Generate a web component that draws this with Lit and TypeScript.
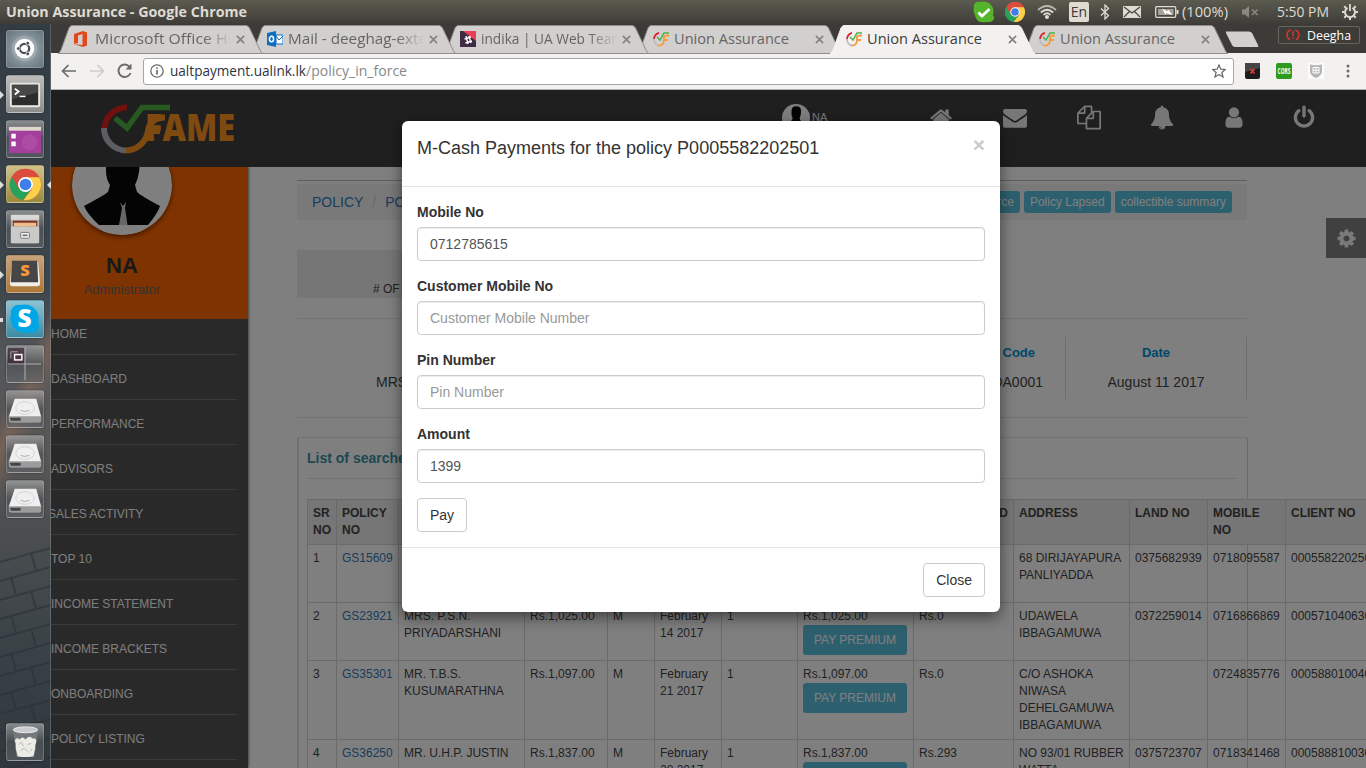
import { LitElement, html, svg, css, nothing } from "lit";
import { customElement, property } from "lit/decorators.js";

/** Desktop-chrome label fitted to a given width. */
const label = (text: string, width: number, size: number, cls = "") => html`<svg
  class="label ${cls}" width=${width} height="20" viewBox="0 0 ${width} 20"
><text x="0" y="15" font-size=${size} textLength=${width} lengthAdjust="spacingAndGlyphs">${text}</text></svg>`;

const labelCss = css`
  .label { display: block; overflow: visible; font-family: "Open Sans", "Noto Sans", sans-serif; flex: none; }
`;

const chromeBall = svg`
  <circle cx="20" cy="20" r="16" fill="#e0503f"/>
  <path d="M20 20 L6 12 A16 16 0 0 0 18 36 L26 24Z" fill="#25a35a"/>
  <path d="M6 12 A16 16 0 0 1 34 12 L20 12 L13 24Z" fill="#dd4b3e"/>
  <path d="M20 12.5H34A16 16 0 0 1 18 36L27 24Z" fill="#fdd04a"/>
  <circle cx="20" cy="20" r="7.6" fill="#fff"/><circle cx="20" cy="20" r="6" fill="#3f7ee8"/>`;

const fameMark = svg`
  <path d="M6 1.8A7 7 0 0 0 1 8" stroke="#d8232f" stroke-width="1.8" fill="none"/>
  <path d="M1 8A7 7 0 0 0 5 14.5" stroke="#b9b9b9" stroke-width="1.5" fill="none"/>
  <path d="M5 14.5Q11 15 11 9V5.5Q11 4.500 16 4.500M11 9H15" stroke="#f79a3b" stroke-width="1.8" fill="none"/>
  <path d="M4 6L7 9L11 2H16" stroke="#4caf50" stroke-width="1.5" fill="none"/>`;

/* ---------------------------------------------------------------- top panel */
@customElement("system-panel")
class SystemPanel extends LitElement {
  static styles = [labelCss, css`
    :host { display: flex; height: 24px; align-items: center; background: linear-gradient(#5c5b50, #3d3c37); fill: #dfdbd2; }
    .title { flex: 1; padding-left: 6px; font-weight: 700; }
    .cell { flex: none; height: 24px; display: flex; align-items: center; }
    .c23 { width: 23px; } .c24 { width: 24px; } .c27 { width: 27px; } .c31 { width: 31px; }
    .c32 { width: 32px; } .c36 { width: 36px; } .c59 { width: 59px; } .c65 { width: 65px; }
    .lang { width: 20px; height: 20px; border-radius: 2px; background: #dfdbd2; color: #3d3c37; font: 14px/20px "Open Sans", sans-serif; text-align: center; }
  `];
  render() {
    return html`
      <div class="title">${label("Union Assurance - Google Chrome", 241, 14.5)}</div>
      <div class="cell c32"><svg width="22" height="22" viewBox="0 0 22 22"><path d="M1 7C0 3 3 0 7 1Q16-1 20 7Q21 11 20 14C23 18 19 22 15 21Q3 23 2 14Q0 11 1 7Z" fill="#54b52d"/><path d="M5.500 11.500L9 15L16.500 8" stroke="#fff" stroke-width="2.800" fill="none"/></svg></div>
      <div class="cell c32"><svg width="20" height="20" viewBox="4 4 32 32">${chromeBall}</svg></div>
      <div class="cell c32"><svg width="20" height="16" viewBox="0 0 20 16" fill="none" stroke="#dfdbd2" stroke-width="1.700"><path d="M1 6Q10-2 19 6" opacity=".75"/><path d="M3.800 8.500Q10 3 16.200 8.500"/><path d="M6.500 11Q10 7.500 13.500 11"/><circle cx="10" cy="13" r="1.200" fill="#dfdbd2"/></svg></div>
      <div class="cell c31"><div class="lang">En</div></div>
      <div class="cell c23"><svg width="10" height="16" viewBox="0 0 10 16" fill="none" stroke="#dfdbd2" stroke-width="1.300"><path d="M1 4.500L8.500 11.500L5 15V1L8.500 4.500L1 11.500"/></svg></div>
      <div class="cell c32"><svg width="18" height="12" viewBox="0 0 18 12"><rect width="18" height="12"/><path d="M1 1L9 7L17 1M1 11L6.500 5.500M17 11L11.500 5.500" stroke="#45443e" stroke-width="1.200" fill="none"/></svg></div>
      <div class="cell c27"><svg width="24" height="12" viewBox="0 0 24 12"><rect x=".7" y=".7" width="20" height="10.600" rx="1" fill="none" stroke="#dfdbd2" stroke-width="1.300"/><rect x="3" y="3" width="15.500" height="6" fill="#a5a299"/><rect x="21.500" y="4" width="2" height="4"/><path d="M7 2.500L12.500 5.500L13 3.500L17.500 9L11 7L10.500 9Z" fill="#fff"/></svg></div>
      <div class="cell c59">${label("(100%)", 46, 14)}</div>
      <div class="cell c36"><svg width="18" height="14" viewBox="0 0 18 14" opacity=".42"><path d="M1 4.500H4L8 1V13L4 9.500H1Z"/><path d="M11 4.500L16.500 10M16.500 4.500L11 10" stroke="#dfdbd2" stroke-width="1.600"/></svg></div>
      <div class="cell c65">${label("5:50 PM", 52, 14)}</div>
      <div class="cell c24"><svg width="16" height="16" viewBox="0 0 16 16" fill="none" stroke="#dfdbd2"><path d="M5.500 3.900A5 5 0 1 0 10.500 3.900" stroke-width="2"/><path d="M8 0V7" stroke-width="1.800"/><path d="M0 8H2M14 8H16M8 14V16M2.300 2.300L4 4M12 4L13.700 2.300M2.300 13.700L4 12M12 12L13.700 13.700" stroke-width="2"/></svg></div>`;
  }
}

/* ----------------------------------------------------------------- launcher */
const drive = svg`<path d="M9 9H31L36 27V30Q36 33 34 33H5Q3 33 3 30V27Z" fill="#efefef"/><path d="M3 27H36V30Q36 33 34 33H5Q3 33 3 30Z" fill="#9c9c9c"/><path d="M4 28.500H15V31.500H5Z" fill="#444"/><ellipse cx="19.500" cy="18.500" rx="9.500" ry="6.500" fill="none" stroke="#d2d2d2"/><path d="M15 21Q19 23 24 21" stroke="#aaa" fill="none"/>`;
const tiles: { bg: string; art: unknown; mark?: string }[] = [
  { bg: "ubuntu", art: svg`<circle cx="19" cy="19" r="13" fill="#aeb6bb" opacity=".5"/><circle cx="19" cy="19" r="10" fill="#fff"/><circle cx="19" cy="19" r="4.800" fill="none" stroke="#4a4d50" stroke-width="2.300"/><g fill="#4a4d50" stroke="#fff" stroke-width=".8"><circle cx="12.700" cy="19" r="1.900"/><circle cx="22.300" cy="13.500" r="1.900"/><circle cx="22.300" cy="24.500" r="1.900"/></g>` },
  { bg: "silver", mark: "left", art: svg`<rect x="4" y="8" width="31" height="25" rx="2" fill="#e8e8e6"/><rect x="6" y="10" width="27" height="21" fill="#2c2c2c"/><path d="M6 10H33V18L6 25Z" fill="#474747"/><path d="M9 14L13 17L9 20" stroke="#fff" stroke-width="1.800" fill="none"/><path d="M14 22H20" stroke="#fff" stroke-width="1.500"/>` },
  { bg: "slate", art: svg`<rect x="3" y="7" width="33" height="27" fill="#a43f9d"/><rect x="3" y="7" width="33" height="4" fill="#ded7cc"/><circle cx="24" cy="23" r="8" fill="#c165b5" opacity=".35"/><path d="M5.500 14H10V19H5.500ZM5.500 22H10V27H5.500Z" fill="#fff"/>` },
  { bg: "gold", mark: "both", art: chromeBall },
  { bg: "slate", art: svg`<rect x="5" y="5" width="29" height="29" rx="2" fill="#b4b2af"/><rect x="5" y="5" width="29" height="5" fill="#d9d9d7"/><path d="M7 11H32V17H7Z" fill="#7a2c20"/><path d="M8 13H31V17H8Z" fill="#eebd8b"/><rect x="5" y="17" width="29" height="17" rx="1" fill="#cbcac8"/><rect x="15" y="23" width="9" height="6" rx="1" fill="#eee" stroke="#777"/><path d="M17 26H22" stroke="#666" stroke-width="1.500"/>` },
  { bg: "bronze", mark: "left", art: svg`<path d="M6 7H33L35 29Q35 32 32 32H7Q4 32 4 29Z" fill="#f1eee9"/><path d="M6 6H32L33 28H5Z" fill="#464646"/><text x="19.500" y="22" text-anchor="middle" font-family="Open Sans" font-weight="800" font-size="17" fill="#f6983b">S</text>` },
  { bg: "sky", mark: "dot", art: svg`<circle cx="19" cy="19" r="14.500" fill="#00a6e6"/><circle cx="13" cy="13" r="8" fill="#00a6e6"/><circle cx="26" cy="26" r="8" fill="#00a6e6"/><text x="19" y="28" text-anchor="middle" font-family="Open Sans" font-weight="800" font-size="25" fill="#fff">S</text>` },
  { bg: "slate", art: svg`<rect x="2" y="3" width="17" height="17" fill="#3a2230" opacity=".7"/><path d="M19.500 2V36M2 19.500H36" stroke="#b5b5b5"/><path d="M5 14V7H12" stroke="#aaa" fill="none"/><rect x="8.800" y="9.800" width="7.500" height="5.500" fill="none" stroke="#fff" stroke-width="1.500"/>` },
  { bg: "slate", art: drive }, { bg: "slate", art: drive }, { bg: "slate", art: drive },
];
const bricks = (() => {
  const out: unknown[] = [];
  for (let r = 0; r < 12; r++) {
    const y = 22 + r * 19;
    out.push(svg`<path d="M0 ${y + 7}L51 ${y - 7}"/>`);
    const x = r % 2 ? 11 : 31;
    out.push(svg`<path d="M${x} ${y + 6 - x * 0.27}L${x + 5} ${y + 24 - x * 0.27}"/>`);
  }
  return out;
})();

@customElement("app-launcher")
class AppLauncher extends LitElement {
  static styles = css`
    :host { display: flex; flex-direction: column; justify-content: space-between; align-items: center; box-sizing: border-box; height: 744px; padding: 6px 1px 7px 0; position: relative; overflow: hidden;
      background: linear-gradient(115deg, transparent 46%, rgba(170, 120, 90, .35) 50%, transparent 56%), linear-gradient(#343c43, #3d464d 35%, #55565a 45%, #5a5654 58%, #4d5052 66%, #394146 85%, #30383e); }
    .wall { position: absolute; left: 0; bottom: 0; stroke: #2b3237; stroke-width: 2; fill: none; opacity: .6; }
    .edge { position: absolute; right: 0; top: 0; width: 1px; height: 100%; background: rgba(160, 165, 168, .35); }
    .stack { display: flex; flex-direction: column; gap: 7px; position: relative; }
    .tile { position: relative; width: 36px; height: 36px; border: 1px solid rgba(200, 205, 208, .3); border-radius: 3px; box-shadow: 0 0 2px rgba(0, 0, 0, .4); }
    .tile svg { display: block; width: 38px; height: 38px; margin: -1px; }
    .ubuntu { background: radial-gradient(#b8bec2, #7b8991 65%, #66757e); }
    .silver { background: linear-gradient(#bdbcb9, #8d8d8b); }
    .slate { background: linear-gradient(rgba(165, 165, 165, .75), rgba(80, 84, 88, .75) 50%, rgba(100, 104, 108, .6)); }
    .gold { background: linear-gradient(#cfc08a, #9c8a3b); }
    .bronze { background: linear-gradient(#c9a27a, #ad7836); }
    .sky { background: linear-gradient(#8cc3d2, #3d8ba3); }
    .left::before, .both::before { content: ""; position: absolute; left: -7px; top: 15px; border: 4px solid transparent; border-left-color: #ddd; border-right: 0; }
    .both::after { content: ""; position: absolute; right: -8px; top: 15px; border: 4px solid transparent; border-right-color: #ddd; border-left: 0; }
    .dot::before { content: ""; position: absolute; left: -7px; top: 17px; width: 3px; height: 4px; background: #ddd; }
  `;
  render() {
    return html`
      <svg class="wall" width="51" height="235" viewBox="0 0 51 235">${bricks}</svg>
      <div class="edge"></div>
      <div class="stack">
        ${tiles.map((t) => html`<div class="tile ${t.bg} ${t.mark ?? ""}"><svg viewBox="0 0 39 39">${t.art}</svg></div>`)}
      </div>
      <div class="stack"><div class="tile slate"><svg viewBox="0 0 39 39"><path d="M7 6H33L29 35H11Z" fill="#74797d"/><ellipse cx="20" cy="7" rx="12.500" ry="3" fill="#c8cccc" stroke="#eee"/><path d="M9 18Q11 14 14 17Q17 13 20 17Q24 12 27 16Q32 15 31 20Q29 23 30 26L28 34Q20 36 12 34L10 26Q11 22 9 18Z" fill="#ecece7"/><path d="M13 22L16 20L18 24M22 22L26 21M15 28L19 26L23 30M25 29L27 26" stroke="#b9b9b2" fill="none"/></svg></div></div>`;
  }
}

/* ------------------------------------------------------------ browser chrome */
const office = svg`<path d="M0 3L9 0L13 1.500V14.500L9 16L0 13L8.500 14V3L4 4.500V12L0 13Z" fill="#e0491b"/>`;
const outlook = svg`<path d="M0 2L9 0V16L0 14Z" fill="#0f6fc0"/><rect x="9" y="4" width="7" height="9" fill="#fff" stroke="#0f6fc0"/><path d="M9 5L12 9L16 5" stroke="#0f6fc0" fill="none"/><ellipse cx="4.500" cy="8" rx="2.100" ry="2.700" fill="none" stroke="#fff" stroke-width="1.500"/>`;
const slack = svg`<rect width="16" height="16" fill="#3f2c42"/><path d="M3 0H16V10Z" fill="#ec4058"/><path d="M4.500 8L11 6M5.500 12L12 10M6 5L8 13M9 5L11 12" stroke="#fff" stroke-width="1.400"/>`;
const tabs = [
  { icon: office, text: "Microsoft Office Ho", w: 142, fade: true },
  { icon: outlook, text: "Mail - deeghag-exte", w: 139, fade: true },
  { icon: slack, text: "indika | UA Web Team", w: 143, fade: true },
  { icon: fameMark, text: "Union Assurance", w: 115 },
  { icon: fameMark, text: "Union Assurance", w: 115, active: true },
  { icon: fameMark, text: "Union Assurance", w: 115 },
];

@customElement("browser-chrome")
class BrowserChrome extends LitElement {
  static styles = [labelCss, css`
    :host { display: block; }
    .strip { display: flex; height: 29px; padding-left: 7px; background: #3c3b37; align-items: flex-end; }
    .tab { flex: none; width: 206px; height: 28px; margin-right: -13px; position: relative; display: flex; align-items: center; box-sizing: border-box; padding-left: 16px; fill: #656565; }
    .shape { position: absolute; left: 0; top: 0; fill: #d2d0ce; stroke: #8f8e8b; }
    .active { fill: #3c3c3c; }
    .active .shape { fill: #f2f1f0; stroke: #f2f1f0; }
    .ico { position: relative; flex: none; width: 16px; height: 16px; margin-right: 5px; }
    .txt { position: relative; width: 139px; overflow: hidden; }
    .fade { -webkit-mask-image: linear-gradient(90deg, #000 78%, transparent 98%); mask-image: linear-gradient(90deg, #000 78%, transparent 98%); }
    .x { position: relative; width: 9px; height: 9px; margin-left: 2px; stroke: #84827f; stroke-width: 1.8; }
    .plus { flex: none; margin: 0 0 5px 9px; }
    .user { flex: none; margin: 0 0 9px 19px; width: 82px; height: 18px; border: 1px solid #67655e; border-radius: 2px; display: flex; align-items: center; justify-content: space-between; padding: 0 8px 0 7px; box-sizing: border-box; fill: #fff; }
    .bar { height: 37px; box-sizing: border-box; background: #f2f1f0; border-bottom: 1px solid #b5b3b0; display: flex; align-items: center; padding: 0 9px 0 10px; }
    .nav { flex: none; margin-right: 12px; }
    .url { flex: none; width: 1091px; height: 27px; margin-left: -2px; border: 1px solid #a9a7a5; border-radius: 3px; background: #fff; display: flex; align-items: center; padding: 0 7px 0 6px; box-sizing: border-box; }
    .host { fill: #2c3340; margin: 0 0 0 6px; } .path { fill: #888; }
    .star { margin-left: auto; }
    .ext { flex: none; margin-left: 16px; }
    .url + .ext { margin-left: 11px; }
    .more { margin-left: 22px; }
  `];
  render() {
    return html`
      <div class="strip">
        ${tabs.map((t, i) => html`<div class="tab ${t.active ? "active" : ""}" style="z-index:${t.active ? 20 : 10 - i}">
          <svg class="shape" width="206" height="29" viewBox="0 0 206 29"><path d="M.5 28.500Q2 27 3 25L11 3Q12.500 .5 14 .5H188Q190 .5 191.500 3L202 25Q203 28 205 28.500Z"/></svg>
          <svg class="ico" viewBox="0 0 16 16">${t.icon}</svg>
          <div class="txt ${t.fade ? "fade" : ""}">${label(t.text, t.w, 14.5)}</div>
          <svg class="x" viewBox="0 0 10 10"><path d="M1 1L9 9M9 1L1 9"/></svg>
        </div>`)}
        <svg class="plus" width="34" height="17" viewBox="0 0 34 17"><path d="M1 .5H24Q26 .5 27 2L33 14Q34 16 32 16H10Q8 16 7 14L1 2Z" fill="#d2d0ce"/></svg>
        <div class="user"><svg width="14" height="12" viewBox="0 0 14 12" fill="none" stroke="#d8362c" stroke-width="1.500"><path d="M5 1Q1 2 1 6Q1 9 4 11M9 1Q13 2 13 6Q13 9 10 11M7 2V7M7 8.500V10"/></svg>${label("Deegha", 44, 13)}</div>
      </div>
      <div class="bar">
        <svg class="nav" width="16" height="14" viewBox="0 0 16 14" fill="none" stroke="#6b6b6b" stroke-width="1.700"><path d="M15 7H2M7.500 1L1.500 7L7.500 13"/></svg>
        <svg class="nav" width="16" height="14" viewBox="0 0 16 14" fill="none" stroke="#cfcdcb" stroke-width="1.700"><path d="M1 7H14M8.500 1L14.500 7L8.500 13"/></svg>
        <svg class="nav" width="16" height="16" viewBox="0 0 16 16" fill="none" stroke="#6b6b6b" stroke-width="1.900"><path d="M13.500 10A6.200 6.200 0 1 1 12.500 3.800"/><path d="M14.500 .5V6.500H8.500Z" fill="#6b6b6b" stroke="none"/></svg>
        <div class="url">
          <svg width="14" height="14" viewBox="0 0 14 14" fill="none" stroke="#6b6b6b" stroke-width="1.300"><circle cx="7" cy="7" r="6.200"/><path d="M7 6V10.500M7 3.300V4.800" stroke-width="1.700"/></svg>
          ${label("ualtpayment.ualink.lk", 136, 14, "host")}${label("/policy_in_force", 101, 14, "path")}
          <svg class="star" width="14" height="14" viewBox="0 0 14 14" fill="none" stroke="#6b6b6b" stroke-width="1.300"><path d="M7 1L8.800 5.200L13.300 5.500L9.900 8.500L11 13L7 10.500L3 13L4.100 8.500L.7 5.500L5.200 5.200Z"/></svg>
        </div>
        <svg class="ext" width="15" height="16" viewBox="0 0 15 16"><rect width="15" height="16" rx="2" fill="#1c1c1c"/><path d="M0 0H15V5L0 9Z" fill="#454545"/><path d="M5.500 6L9.500 10.500M9.500 6L5.500 10.500" stroke="#e33" stroke-width="1.800"/></svg>
        <svg class="ext" width="16" height="16" viewBox="0 0 16 16"><rect width="16" height="16" rx="2" fill="#2e9a1e"/><text x="1.500" y="11" font-family="Open Sans" font-weight="700" font-size="8" textLength="13" lengthAdjust="spacingAndGlyphs" fill="#fff">CORS</text></svg>
        <svg class="ext" width="16" height="16" viewBox="0 0 16 16"><rect width="16" height="16" fill="#fafafa"/><path d="M2 1.500Q8 3 14 1.500V9Q13 13 8 15Q3 13 2 9Z" fill="#b5b5b5"/><path d="M5 4.500H11V10H5ZM5 7.200H11M8 4.500V10" stroke="#fff" fill="none"/></svg>
        <svg class="more" width="4" height="14" viewBox="0 0 4 14" fill="#6b6b6b"><circle cx="2" cy="2" r="1.500"/><circle cx="2" cy="7" r="1.500"/><circle cx="2" cy="12" r="1.500"/></svg>
      </div>`;
  }
}

/* --------------------------------------------------------------- page content */
const glyph = {
  home: "M1472 992v480q0 26-19 45t-45 19h-384v-384h-256v384h-384q-26 0-45-19t-19-45v-480q0-1 .5-3t.5-3l575-474 575 474q1 2 1 6zm223-69l-62 74q-8 9-21 11h-3q-13 0-21-7l-692-577-692 577q-12 8-24 7-13-2-21-11l-62-74q-8-10-7-23.500t11-21.500l719-599q32-26 76-26t76 26l244 204v-195q0-14 9-23t23-9h192q14 0 23 9t9 23v408l219 182q10 8 11 21.500t-7 23.500z",
  mail: "M1792 710v794q0 66-47 113t-113 47h-1472q-66 0-113-47t-47-113v-794q44 49 101 87 362 246 497 345 57 42 92.500 65.500t94.500 48 110 24.500h2q51 0 110-24.500t94.500-48 92.500-65.500q170-123 498-345 57-39 100-87zm0-294q0 79-49 151t-122 123q-376 261-468 325-10 7-42.500 31t-54 38.500-52 32.500-57.500 27-50 9h-2q-23 0-50-9t-57.500-27-52-32.500-54-38.500-42.500-31q-91-64-262-182.500t-205-142.500q-62-42-117-115.500t-55-136.500q0-78 41.500-130t118.500-52h1472q65 0 112.500 47t47.500 113z",
  files: "M1696 384q40 0 68 28t28 68v1216q0 40-28 68t-68 28h-960q-40 0-68-28t-28-68v-288h-544q-40 0-68-28t-28-68v-672q0-40 20-88t48-76l408-408q28-28 76-48t88-20h416q40 0 68 28t28 68v328q68-40 128-40h416zm-544 213l-299 299h299v-299zm-640-384l-299 299h299v-299zm196 647l316-316v-416h-384v416q0 40-28 68t-68 28h-416v640h512v-256q0-40 20-88t48-76zm956 804v-1152h-384v416q0 40-28 68t-68 28h-416v640h896z",
  bell: "M912 1696q0-16-16-16-59 0-101.500-42.500t-42.500-101.500q0-16-16-16t-16 16q0 73 51.500 124.500t124.500 51.500q16 0 16-16zm816-288q0 52-38 90t-90 38h-448q0 106-75 181t-181 75-181-75-75-181h-448q-52 0-90-38t-38-90q50-42 91-88t85-119.500 74.500-158.500 50-206 19.500-260q0-152 117-282.500t307-158.500q-8-19-8-39 0-40 28-68t68-28 68 28 28 68q0 20-8 39 190 28 307 158.500t117 282.500q0 139 19.500 260t50 206 74.500 158.500 85 119.500 91 88z",
  user: "M1536 1399q0 109-62.500 187t-150.500 78h-854q-88 0-150.500-78t-62.500-187q0-85 8.500-160.500t31.500-152 58.500-131 94-89 134.500-34.500q131 128 313 128t313-128q76 0 134.500 34.500t94 89 58.500 131 31.500 152 8.500 160.500zm-256-887q0 159-112.500 271.500t-271.500 112.500-271.500-112.500-112.500-271.500 112.500-271.500 271.500-112.500 271.500 112.500 112.500 271.500z",
  power: "M1664 896q0 156-61 298t-164 245-245 164-298 61-298-61-245-164-164-245-61-298q0-182 80.500-343t226.500-270q43-32 95.500-25t83.500 50q32 42 24.500 94.500t-49.500 84.500q-98 74-151.500 181t-53.500 228q0 104 40.500 198.500t109.500 163.500 163.500 109.500 198.500 40.500 198.500-40.500 163.500-109.500 109.500-163.500 40.500-198.500q0-121-53.500-228t-151.500-181q-42-32-49.500-84.500t24.500-94.500q31-43 84-50t95 25q146 109 226.500 270t80.500 343zm-640-768v640q0 52-38 90t-90 38-90-38-38-90v-640q0-52 38-90t90-38 90 38 38 90z",
  cog: "M1152 896q0-106-75-181t-181-75-181 75-75 181 75 181 181 75 181-75 75-181zm512-109v222q0 12-8 23t-20 13l-185 28q-19 54-39 91 35 50 107 138 10 12 10 25t-9 23q-27 37-99 108t-94 71q-12 0-26-9l-138-108q-44 23-91 38-16 136-29 186-7 28-36 28h-222q-14 0-24.500-8.500t-11.500-21.500l-28-184q-49-16-90-37l-141 107q-10 9-25 9-14 0-25-11-126-114-165-168-7-10-7-23 0-12 8-23 15-21 51-66.500t54-70.500q-27-50-41-99l-183-27q-13-2-21-12.500t-8-23.500v-222q0-12 8-23t19-13l186-28q14-46 39-92-40-57-107-138-10-12-10-24 0-10 9-23 26-36 98.500-107.500t94.500-71.500q13 0 26 10l138 107q44-23 91-38 16-136 29-186 7-28 36-28h222q14 0 24.500 8.500t11.500 21.500l28 184q49 16 90 37l142-107q9-9 24-9 13 0 25 10 129 119 165 170 7 8 7 22 0 12-8 23-15 21-51 66.500t-54 70.500q26 50 41 98l183 28q13 2 21 12.500t8 23.500z",
};
const fa = (d: string, size: number) => html`<svg width=${size} height=${size} viewBox="0 0 1792 1792"><path d=${d} /></svg>`;

const silhouette = svg`
  <circle cx="50" cy="50" r="50" fill="#fff"/>
  <path d="M34 27Q33 8 51 8Q69 8 68 27L67 37Q66 44 63 50L65 57Q69 61 88 71Q86 78 76 90H27Q16 80 12 71Q31 61 36 57L38 50Q34 44 34 36Z" fill="#080808"/>
  <path d="M48 67L51 71L54 67L53 73L55.500 90H47L50 73Z" fill="#cfcfcf"/>`;

const head: string[] = ["SR NO", "POLICY NO", "NAME", "PREMIUM", "MODE", "DUE DATE", "NO OF DUES", "AMOUNT", "AMOUNT PAID", "ADDRESS", "LAND NO", "MOBILE NO", "CLIENT NO"];
const rows: string[][] = [
  ["1", "GS15609", "", "", "M", "", "1", "", "", "68 DIRIJAYAPURA PANLIYADDA", "0375682939", "0718095587", "00055822025001"],
  ["2", "GS23921", "MRS. P.S.N. PRIYADARSHANI", "Rs.1,025.00", "M", "February 14 2017", "1", "Rs.1,025.00", "Rs.0", "UDAWELA IBBAGAMUWA", "0372259014", "0716866869", "00057104063001"],
  ["3", "GS35301", "MR. T.B.S. KUSUMARATHNA", "Rs.1,097.00", "M", "February 21 2017", "1", "Rs.1,097.00", "Rs.0", "C/O ASHOKA NIWASA DEHELGAMUWA IBBAGAMUWA", "", "0724835776", "00058801004001"],
  ["4", "GS36250", "MR. U.H.P. JUSTIN", "Rs.1,837.00", "M", "February 28 2017", "1", "Rs.1,837.00", "Rs.293", "NO 93/01 RUBBER WATTA", "0375723707", "0718341468", "00058881003001"],
];
const menu = ["HOME", "DASHBOARD", "PERFORMANCE", "ADVISORS", "SALES ACTIVITY", "TOP 10", "INCOME STATEMENT", "INCOME BRACKETS", "ONBOARDING", "POLICY LISTING"];

@customElement("policy-page")
class PolicyPage extends LitElement {
  static styles = css`
    :host { display: grid; grid-template: 77px 601px / 197px 1118px; height: 678px; overflow: hidden; background: #fff; color: #444; font: 14px/20px "Liberation Sans", Arial, sans-serif; }
    .top { grid-column: 1 / 3; background: #3f3f3f; display: flex; align-items: flex-start; fill: #eee; position: relative; z-index: 1; }
    .logo { margin: 10px 0 0 48px; }
    .avatar { margin: 14px 0 0 543px; width: 147px; display: flex; color: #eee; font-size: 11px; line-height: 26px; gap: 2px; }
    .item { width: 24px; margin-top: 15px; display: flex; justify-content: center; }
    .i1 { margin-right: 50px; } .i2 { margin-right: 49px; } .i3 { margin-right: 48px; } .i4 { margin-right: 46px; }
    .side { background: #525252; height: 601px; overflow: hidden; box-shadow: 0 0 3px #333; }
    .profile { height: 152px; background: #ff6600; overflow: hidden; }
    .who { width: 142px; text-align: center; display: flex; flex-direction: column; align-items: center; }
    .photo { display: block; width: 100px; height: 100px; margin: -32px 0 0; border-radius: 50%; box-shadow: 0 2px 5px rgba(0, 0, 0, .5); flex: none; }
    .name { font: 700 22px/26px "Liberation Sans", sans-serif; margin-top: 18px; color: #333; }
    .role { font-size: 13px; line-height: 18px; color: #666; margin-top: 2px; }
    .link { height: 45px; box-sizing: border-box; padding-top: 9px; border-bottom: 1px solid #767676; margin-right: 11px; font-size: 12px; line-height: 30px; color: #fafafa; white-space: nowrap; }
    .link.shift { text-indent: -3px; }
    .link:first-of-type { height: 36px; padding-top: 0; }
    .main { padding: 13px 0 0 49px; position: relative; }
    .wrap { width: 950px; }
    .rule { height: 1px; background: #e6e6e6; }
    .dark { background: #bbb; }
    .crumb { margin-top: 3px; height: 36px; background: #f2f2f2; display: flex; align-items: center; padding: 0 15px; gap: 4px; box-sizing: border-box; }
    .crumb a, td a { color: #337ab7; }
    .sep { color: #ccc; padding: 0 5px; }
    .tag { background: #5bc0de; color: #fff; border-radius: 3px; font-size: 12px; line-height: 22px; padding: 0 6px; white-space: nowrap; }
    .first { margin-left: auto; }
    .count { margin-top: 30px; width: 400px; height: 48px; background: #ececec; font-size: 12px; padding: 29px 0 0 76px; box-sizing: border-box; }
    .count + .rule { margin-top: 20px; }
    .facts { display: flex; height: 98px; align-items: center; }
    .fact { height: 62px; box-sizing: border-box; border-right: 1px solid #ddd; padding-top: 7px; flex: none; }
    .fact b { display: block; font-size: 13px; line-height: 18px; color: #0092d6; margin-bottom: 10px; }
    .owner { flex: 1; padding: 35px 0 0 79px; border: 0; }
    .code { padding-right: 22px; text-align: right; }
    .code b { padding-right: 8px; }
    .date { width: 181px; text-align: center; }
    .panel { margin: 19px -1px 0 0; border: 1px solid #e6e6e6; border-right: 1px solid #d4d4d4; border-left: 2px solid #e0e0e0; border-radius: 2px; height: 400px; padding: 10px 10px 0 8px; box-sizing: border-box; }
    h4 { margin: 0 0 10px; font-size: 14px; line-height: 20px; color: #3a8fa3; }
    table { border-collapse: collapse; table-layout: fixed; width: 1100px; margin-top: 20px; font-size: 12px; line-height: 17px; }
    th, td { border: 1px solid #d4d4d4; padding: 5px; vertical-align: top; text-align: left; height: 34px; box-sizing: content-box; }
    th { background: #ececec; }
    th:nth-child(9) { text-align: right; }
    td { height: 47px; }
    .pay { display: block; background: #5bc0de; color: #fff; border-radius: 3px; height: 30px; line-height: 30px; width: 104px; text-align: center; }
    .gear { position: absolute; right: 0; top: 51px; width: 40px; height: 40px; background: #808080; fill: #f4f4f4; display: flex; align-items: center; justify-content: center; }
  `;
  render() {
    const cols = [29, 62, 126, 83, 47, 67, 76, 116, 100, 116, 78, 78, 122];
    return html`
      <header class="top">
        <svg class="logo" width="140" height="58" viewBox="0 0 140 58" fill="none" stroke-width="6">
          <path d="M28 7.500A22 22 0 0 0 5.500 28" stroke="#e0201f"/><path d="M5 28A22.500 22.500 0 0 0 27 50.500" stroke="#bcbcc4"/>
          <path d="M27 50.500A23 23 0 0 0 49 31Q51 17.500 66 17.500M49 31H61" stroke="#ff941f"/>
          <path d="M16 18L28 28L43 7.500H71" stroke="#4cb140" stroke-width="5.500"/>
          <text x="46" y="41" font-family="Open Sans" font-weight="800" font-size="37" textLength="90" lengthAdjust="spacingAndGlyphs" fill="#ff941f">FAME</text>
        </svg>
        <div class="avatar"><svg width="28" height="28" viewBox="0 0 100 100">${silhouette}</svg>NA</div>
        <div class="item i1">${fa(glyph.home, 26)}</div><div class="item i1">${fa(glyph.mail, 25)}</div>
        <div class="item i2">${fa(glyph.files, 25)}</div><div class="item i3">${fa(glyph.bell, 25)}</div>
        <div class="item i4">${fa(glyph.user, 25)}</div><div class="item">${fa(glyph.power, 25)}</div>
      </header>
      <nav class="side">
        <div class="profile"><div class="who">
          <svg class="photo" viewBox="0 0 100 100">${silhouette}</svg>
          <div class="name">NA</div><div class="role">Administrator</div>
        </div></div>
        <section>${menu.map((m) => html`<div class="link ${m === "SALES ACTIVITY" ? "shift" : ""}">${m}</div>`)}</section>
      </nav>
      <div class="main">
        <div class="wrap">
          <div class="rule dark"></div>
          <div class="crumb"><a>POLICY</a><span class="sep">/</span><a>POLICY</a>
            <span class="tag first">Policy Inforce</span><span class="tag">Policy Lapsed</span><span class="tag">collectible summary</span></div>
          <div class="count"># OF</div>
          <div class="rule"></div>
          <div class="facts">
            <div class="fact owner">MRS.</div>
            <div class="fact code"><b>Code</b>DA0001</div>
            <div class="fact date"><b>Date</b>August 11 2017</div>
          </div>
          <div class="rule"></div>
          <div class="panel">
            <h4>List of searched policies</h4>
            <div class="rule"></div>
            <table>
              <colgroup>${cols.map((c) => html`<col width=${c} />`)}</colgroup>
              <thead><tr>${head.map((h) => html`<th>${h}</th>`)}</tr></thead>
              <tbody>${rows.map((r) => html`<tr>${r.map((c, i) => html`<td>${i === 1 ? html`<a>${c}</a>` : c}${i === 7 && c ? html`<span class="pay">PAY PREMIUM</span>` : nothing}</td>`)}</tr>`)}</tbody>
            </table>
          </div>
        </div>
        <div class="gear">${fa(glyph.cog, 21)}</div>
      </div>`;
  }
}

/* --------------------------------------------------------------------- modal */
@customElement("payment-dialog")
class PaymentDialog extends LitElement {
  @property() policy = "";
  static styles = css`
    :host { display: block; width: 598px; height: 491px; box-sizing: border-box; background: #fff; border-radius: 6px; box-shadow: 0 5px 15px rgba(0, 0, 0, .5); color: #333; font: 14px/20px "Liberation Sans", Arial, sans-serif; }
    header { border-bottom: 1px solid #e5e5e5; padding: 15px; height: 35px; display: flex; justify-content: space-between; align-items: flex-start; }
    h4 { margin: 0; font-weight: 400; font-size: 18px; line-height: 24px; }
    .x { font: 700 21px/18px "Liberation Sans", sans-serif; color: #ccc; }
    .body { padding: 15px; height: 330px; }
    .field { margin-bottom: 15px; }
    label { display: block; font-weight: 700; height: 20px; margin-bottom: 5px; }
    input { display: block; width: 100%; height: 34px; box-sizing: border-box; border: 1px solid #ccc; border-radius: 4px; padding: 6px 12px; font: inherit; color: #555; box-shadow: inset 0 1px 1px rgba(0, 0, 0, .075); background: #fff; }
    input::placeholder { color: #999; opacity: 1; }
    button { display: block; height: 34px; border: 1px solid #ccc; border-radius: 4px; background: #fff; padding: 6px 12px; font: inherit; color: #333; }
    footer { border-top: 1px solid #e5e5e5; padding: 15px; display: flex; justify-content: flex-end; }
  `;
  render() {
    const fields = [["Mobile No", "0712785615", ""], ["Customer Mobile No", "", "Customer Mobile Number"], ["Pin Number", "", "Pin Number"], ["Amount", "1399", ""]];
    return html`
      <header><h4>M-Cash Payments for the policy ${this.policy}</h4><span class="x">×</span></header>
      <div class="body">
        ${fields.map(([l, v, p]) => html`<div class="field"><label>${l}</label><input .value=${v} placeholder=${p} /></div>`)}
        <button>Pay</button>
      </div>
      <footer><button>Close</button></footer>`;
  }
}

@customElement("app-root")
class AppRoot extends LitElement {
  static styles = css`
    :host { display: grid; grid-template: 24px 744px / 51px 1315px; width: 1366px; height: 768px; overflow: hidden; }
    system-panel { grid-column: 1 / 3; }
    .window { display: flex; flex-direction: column; min-width: 0; }
    .view { position: relative; height: 678px; overflow: hidden; }
    .backdrop { position: absolute; inset: 0; background: rgba(0, 0, 0, .5); z-index: 5; }
    payment-dialog { position: absolute; left: 351px; top: 31px; z-index: 6; }
  `;
  render() {
    return html`
      <system-panel></system-panel>
      <app-launcher></app-launcher>
      <div class="window">
        <browser-chrome></browser-chrome>
        <div class="view">
          <policy-page></policy-page>
          <div class="backdrop"></div>
          <payment-dialog policy="P0005582202501"></payment-dialog>
        </div>
      </div>`;
  }
}
